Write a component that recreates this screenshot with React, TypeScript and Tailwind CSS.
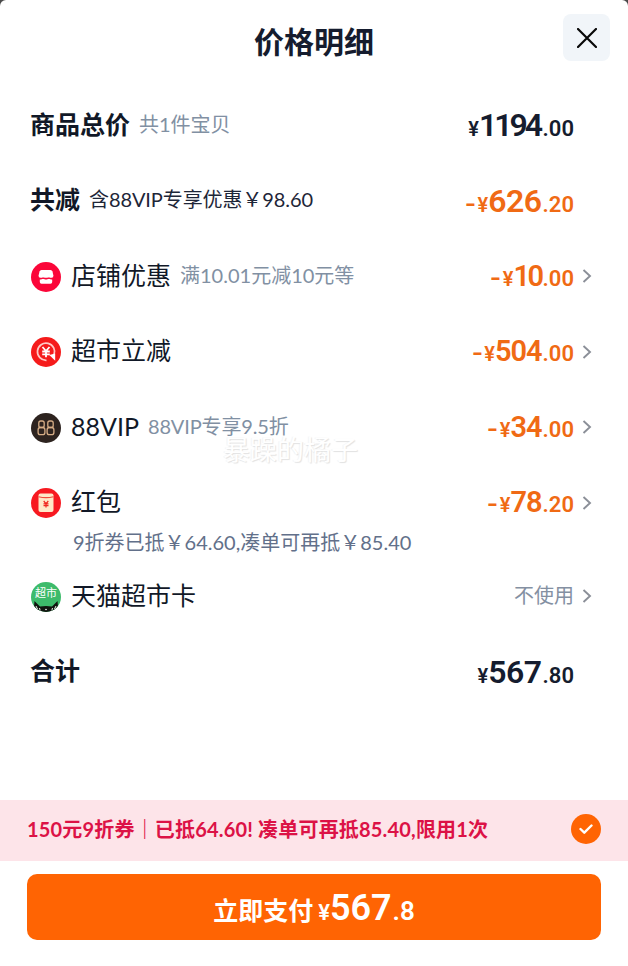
import React from "react";

const sans = "font-[Lato,'Noto_Sans_CJK_SC',sans-serif]";
const digits = "font-[Roboto,'Noto_Sans_CJK_SC',sans-serif]";

type PriceProps = {
  whole: string;
  cents: string;
  minus?: boolean;
  size?: string;
  tone?: string;
};

function Price({ whole, cents, minus = false, size = "text-[29px] tracking-[-1px]", tone = "text-[#f06a14]" }: PriceProps) {
  return (
    <span className={`${digits} ${tone} flex items-baseline font-semibold leading-none whitespace-nowrap`}>
      {minus && <span className="mr-px inline-block origin-left scale-x-[1.3] pr-[3px] text-[23px]">-</span>}
      <span className="text-[20px]">¥</span>
      <span className={size}>{whole}</span>
      <span className="ml-px text-[22px] font-semibold">.{cents}</span>
    </span>
  );
}

function Chevron() {
  return (
    <svg className="ml-2 h-[16px] w-[10px] shrink-0" viewBox="0 0 10 16" fill="none">
      <path d="M1.500 2 8 8l-6.500 6" stroke="#8b8f98" strokeWidth="1.900" />
    </svg>
  );
}

function ShopIcon() {
  return (
    <svg viewBox="0 0 30 30" className="size-[30px]">
      <circle cx="15" cy="15" r="15" fill="#fb0639" />
      <path d="M10.500 8h9q1.500 0 2 1.500l.9 4q.2 2.300-1.800 2.300h-11.200q-2 0-1.800-2.300l.9-4Q9 8 10.500 8Z" fill="#fff" />
      <path d="M8.800 17.500q1.700 0 3.200-.8 3 1.500 6 0 1.500.8 3.200.8V20q0 1.700-1.700 1.700h-9Q8.800 21.700 8.800 20Z" fill="#fff" />
      <path d="M8 16.500q2.200.7 4-.5 3 1.500 6 0 1.800 1.200 4 .5" fill="none" stroke="#fb0639" strokeWidth="1" />
    </svg>
  );
}

function DiscountIcon() {
  return (
    <svg viewBox="0 0 30 30" className="size-[30px]">
      <circle cx="15" cy="15" r="15" fill="#f51b1b" />
      <path d="M15.500 23.300A8.600 8.600 0 1 1 23 18" fill="none" stroke="#ffc9c5" strokeWidth="1.700" />
      <path d="m18.300 18 5.900-1.500v7.200Z" fill="#fff" />
      <path d="m11.500 10 3.500 4 3.500-4M11.200 14.500h7.600M11.200 17.300h7.600M15 14v6.300" fill="none" stroke="#fff" strokeWidth="1.800" />
    </svg>
  );
}

function VipIcon() {
  return (
    <svg viewBox="0 0 30 30" className="size-[30px]">
      <circle cx="15" cy="15" r="15" fill="#2d231f" />
      <g fill="none" stroke="#d6ad86" strokeWidth="1.300">
        <rect x="7.800" y="8" width="5.400" height="6.500" rx="2" />
        <rect x="7.100" y="14.500" width="6.800" height="7.200" rx="2.300" />
        <rect x="16.800" y="8" width="5.400" height="6.500" rx="2" />
        <rect x="16.100" y="14.500" width="6.800" height="7.200" rx="2.300" />
      </g>
    </svg>
  );
}

function RedPacketIcon() {
  return (
    <svg viewBox="0 0 30 30" className="size-[30px]">
      <circle cx="15" cy="15" r="15" fill="#f71920" />
      <rect x="7.500" y="5.500" width="15" height="18.500" rx="2" fill="#ffe8c8" />
      <path d="M7.500 8.700q7.500 1.800 15 0" fill="none" stroke="#ef4b3c" strokeWidth="1.100" />
      <path d="m12.700 13 2.300 2.700 2.300-2.700M12.500 15.900h5M12.500 17.700h5M15 15.500v4" fill="none" stroke="#f0271f" strokeWidth="1.200" />
    </svg>
  );
}

function MarketCardIcon() {
  return (
    <span className="relative flex size-[30px] justify-center overflow-hidden rounded-full bg-[#3dbb6b]">
      <svg viewBox="0 0 30 30" className="absolute inset-0 size-[30px]">
        <path d="M3.500 19 9 24.500q6-1.200 12 0l5.500-5.500 1 11h-25Z" fill="#10150f" />
        <path d="m5 24 1.500 3M8.500 26l.7 2.500M25 24l-1.500 3M21.500 26l-.7 2.500" stroke="#e8f5e8" strokeWidth="1" />
        <circle cx="15" cy="27.500" r=".8" fill="#fff" />
      </svg>
      <span className={`${sans} relative mt-[5px] text-[11px] leading-[12px] whitespace-nowrap text-white`}>超市</span>
    </span>
  );
}

type RowProps = {
  icon?: React.ReactNode;
  label: string;
  note?: string;
  noteClass?: string;
  bold?: boolean;
  right: React.ReactNode;
  arrow?: boolean;
};

function Row({ icon, label, note, noteClass = "text-[#8190a3]", bold = false, right, arrow = false }: RowProps) {
  return (
    <div className={`flex h-[75.5px] items-center ${bold ? "pl-[30px]" : "pl-[31px]"} ${arrow ? "pr-[36px]" : "pr-[54px]"}`}>
      {icon && <span className="mt-[3px] mr-[10px] shrink-0">{icon}</span>}
      <div className="flex items-start">
        <span className={`text-[25px] leading-[37px] text-[#111827] ${bold ? "font-bold" : ""}`}>{label}</span>
        {note && <span className={`ml-[9px] text-[20px] leading-[37px] whitespace-nowrap ${noteClass}`}>{note}</span>}
      </div>
      <div className="mt-[2px] ml-auto flex items-center">
        {right}
        {arrow && <Chevron />}
      </div>
    </div>
  );
}

export default function App() {
  return (
    <div className="h-[966px] w-[628px] bg-[#4a4a4a]">
      <main className={`${sans} relative flex h-full flex-col overflow-hidden rounded-t-[6px] bg-white`}>
        <header className="flex h-[86.500px] shrink-0 items-start pr-[18px]">
          <h1 className="mt-[21px] ml-[254px] text-[30px] leading-[40px] font-bold text-[#151c2e]">价格明细</h1>
          <button aria-label="关闭" className="mt-[14px] ml-auto flex size-[47px] items-center justify-center rounded-[8px] bg-[#f1f5f9]">
            <svg viewBox="0 0 20 20" className="size-5" fill="none" stroke="#080808" strokeWidth="2.200" strokeLinecap="round">
              <path d="m1 1 18 18M19 1 1 19" />
            </svg>
          </button>
        </header>

        <section className="flex-1">
          <Row bold label="商品总价" note="共1件宝贝" right={<Price whole="1194" cents="00" size="text-[32px] tracking-[-3px] mr-[1.5px]" tone="text-[#151c2e]" />} />
          <Row bold label="共减" note="含88VIP专享优惠￥98.60" noteClass="text-[#1e2638] tracking-[-0.1px]" right={<Price minus whole="626" cents="20" size="text-[32px] tracking-[-0.5px]" />} />
          <Row icon={<ShopIcon />} label="店铺优惠" note="满10.01元减10元等" arrow right={<Price minus whole="10" cents="00" size="text-[29px] tracking-[-2.5px]" />} />
          <Row icon={<DiscountIcon />} label="超市立减" arrow right={<Price minus whole="504" cents="00" />} />
          <Row icon={<VipIcon />} label="88VIP" note="88VIP专享9.5折" noteClass="text-[#8190a3] tracking-[-0.15px]" arrow right={<Price minus whole="34" cents="00" />} />
          <Row icon={<RedPacketIcon />} label="红包" arrow right={<Price minus whole="78" cents="20" />} />
          <p className="-mt-[13px] h-[31px] pl-[73px] text-[20px] leading-[30px] text-[#62708a]">9折券已抵￥64.60,凑单可再抵￥85.40</p>
          <Row icon={<MarketCardIcon />} label="天猫超市卡" arrow right={<span className="-mt-[2px] text-[20px] leading-[24px] text-[#8490a2]">不使用</span>} />
          <Row bold label="合计" right={<Price whole="567" cents="80" size="text-[32px] tracking-[-0.5px]" tone="text-[#151c2e]" />} />
        </section>

        <div className="flex h-[61.500px] shrink-0 items-center bg-[#fde4e9] pr-[27px] pl-[27px]">
          <p className="-mt-[3px] text-[20px] leading-[30px] font-bold tracking-[0.18px] whitespace-nowrap text-[#dc1246]">150元9折券｜已抵64.60! 凑单可再抵85.40,限用1次</p>
          <span className="-mt-[3px] ml-auto flex size-[30px] items-center justify-center rounded-full bg-[#ff6403]">
            <svg viewBox="0 0 14 10" className="h-[10px] w-[14px]" fill="none" stroke="#fff" strokeWidth="2.400" strokeLinecap="round" strokeLinejoin="round">
              <path d="m1.500 5 3.800 3.700L12.500 1.500" />
            </svg>
          </span>
        </div>
        <footer className="h-[105px] shrink-0 px-[27px] pt-[13px]">
          <button className="flex h-[66px] w-full items-baseline justify-center rounded-[10px] bg-[#ff6403] pt-[16px] text-white">
            <span className="text-[25px] leading-[40px] font-bold">立即支付</span>
            <span className={`${digits} ml-[5px] text-[22px] leading-none font-semibold`}>¥</span>
            <span className={`${digits} text-[36px] leading-none font-semibold`}>567</span>
            <span className={`${digits} ml-px text-[26px] leading-none font-semibold`}>.8</span>
          </button>
        </footer>

        <span className="pointer-events-none absolute top-[430px] left-[223px] text-[27px] leading-[40px] text-white [text-shadow:1px_1px_1px_#e2e2e2,-1px_0_1px_#f4f4f4]">暴躁的橘子</span>
      </main>
    </div>
  );
}
